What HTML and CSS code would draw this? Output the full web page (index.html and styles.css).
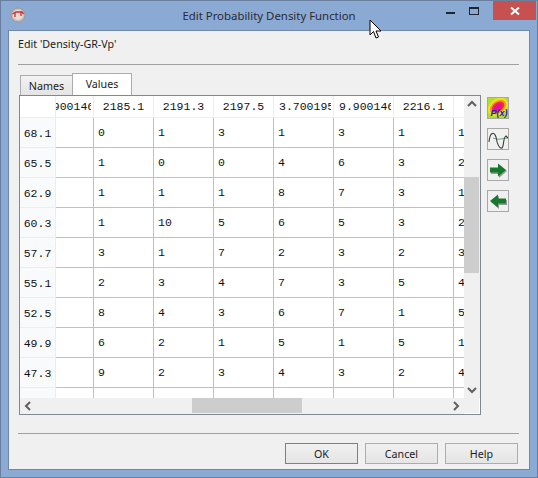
FILE: index.html
```html
<!DOCTYPE html>
<html lang="en">
<head>
    <meta charset="utf-8">
    <meta name="viewport" content="width=device-width, initial-scale=1.0">
    <title>Edit Probability Density Function</title>
    <link rel="stylesheet" href="styles.css">
</head>
<body>
    <div class="window">
        <div class="titlebar">
            <svg class="app-icon" width="18" height="18" viewBox="0 0 18 18">
                <circle cx="9" cy="9" r="7" fill="#c9bfbf" stroke="#a09696"/>
                <circle cx="9" cy="9" r="5" fill="#e6dada"/>
                <path d="M3.500 8 L7 6 L13 6 L14.500 8 M6 6 V11 M12 6 V10" fill="none" stroke="#d02c2c" stroke-width="1.300"/>
            </svg>
            <div class="title">Edit Probability Density Function</div>
            <div class="controls">
                <div class="ctl-min"><span></span></div>
                <div class="ctl-max"><span></span></div>
                <div class="ctl-close">
                    <svg width="10" height="10" viewBox="0 0 10 10"><path d="M1 1.500 L9 8.500 M9 1.500 L1 8.500" stroke="#fff" stroke-width="2"/></svg>
                </div>
            </div>
        </div>
        <div class="client">
            <div class="heading">Edit 'Density-GR-Vp'</div>
            <div class="rule"></div>
            <div class="tabs">
                <div class="tab">Names</div>
                <div class="tab tab-on">Values</div>
            </div>
            <div class="middle">
                <div class="frame">
                    <div class="view">
                        <table class="grid">
                            <colgroup>
                                <col class="c-label"><col class="c-first"><col class="c-n"><col class="c-n"><col class="c-n"><col class="c-n"><col class="c-n"><col class="c-n"><col class="c-n">
                            </colgroup>
                            <tr class="head">
                                <th></th><th class="left"><span class="clip shift">9.900146</span></th><th>2185.1</th><th>2191.3</th><th>2197.5</th><th class="left"><span class="clip">3.700195</span></th><th class="left"><span class="clip">9.900146</span></th><th>2216.1</th><th></th>
                            </tr>
                            <tr><th>68.1</th><td></td><td>0</td><td>1</td><td>3</td><td>1</td><td>3</td><td>1</td><td>1</td></tr>
                            <tr><th>65.5</th><td></td><td>1</td><td>0</td><td>0</td><td>4</td><td>6</td><td>3</td><td>2</td></tr>
                            <tr><th>62.9</th><td></td><td>1</td><td>1</td><td>1</td><td>8</td><td>7</td><td>3</td><td>1</td></tr>
                            <tr><th>60.3</th><td></td><td>1</td><td>10</td><td>5</td><td>6</td><td>5</td><td>3</td><td>2</td></tr>
                            <tr><th>57.7</th><td></td><td>3</td><td>1</td><td>7</td><td>2</td><td>3</td><td>2</td><td>3</td></tr>
                            <tr><th>55.1</th><td></td><td>2</td><td>3</td><td>4</td><td>7</td><td>3</td><td>5</td><td>4</td></tr>
                            <tr><th>52.5</th><td></td><td>8</td><td>4</td><td>3</td><td>6</td><td>7</td><td>1</td><td>5</td></tr>
                            <tr><th>49.9</th><td></td><td>6</td><td>2</td><td>1</td><td>5</td><td>1</td><td>5</td><td>1</td></tr>
                            <tr><th>47.3</th><td></td><td>9</td><td>2</td><td>3</td><td>4</td><td>3</td><td>2</td><td>4</td></tr>
                            <tr><th></th><td></td><td></td><td></td><td></td><td></td><td></td><td></td><td></td></tr>
                        </table>
                    </div>
                    <div class="vbar">
                        <svg width="16" height="16" viewBox="0 0 16 16"><path d="M4 10 L8 6 L12 10" fill="none" stroke="#606060" stroke-width="2"/></svg>
                        <div class="vtrack"><div class="vthumb"></div></div>
                        <svg width="16" height="16" viewBox="0 0 16 16"><path d="M4 6 L8 10 L12 6" fill="none" stroke="#606060" stroke-width="2"/></svg>
                    </div>
                    <div class="hbar">
                        <svg width="16" height="16" viewBox="0 0 16 16"><path d="M10 4 L6 8 L10 12" fill="none" stroke="#606060" stroke-width="2"/></svg>
                        <div class="htrack"><div class="hthumb"></div></div>
                        <svg width="16" height="16" viewBox="0 0 16 16"><path d="M6 4 L10 8 L6 12" fill="none" stroke="#606060" stroke-width="2"/></svg>
                    </div>
                    <div class="corner"></div>
                </div>
                <div class="tools">
                    <div class="tool">
                        <svg width="20" height="20" viewBox="0 0 20 20">
                            <rect width="20" height="20" fill="#b4dc2e"/>
                            <g transform="rotate(-35 10 9)">
                                <ellipse cx="10" cy="9" rx="11" ry="8" fill="#e8e61e"/>
                                <ellipse cx="10" cy="9" rx="9" ry="6" fill="#fb9a1c"/>
                                <ellipse cx="10" cy="9" rx="7" ry="4.500" fill="#f0303a"/>
                                <ellipse cx="10" cy="9" rx="4.500" ry="2.800" fill="#e0109a"/>
                            </g>
                            <text x="19.500" y="18" class="pofx">P(x)</text>
                        </svg>
                    </div>
                    <div class="tool">
                        <svg width="20" height="20" viewBox="0 0 20 20">
                            <path d="M5 9 Q9 11 13 10 T20 9" fill="none" stroke="#5fae80"/>
                            <path d="M1 13 C2 3 6 2 8 8 C9 14 11 20 14 19 C16 18 15 8 18 7 L20 9" fill="none" stroke="#3c3c3c" stroke-width="1.100"/>
                        </svg>
                    </div>
                    <div class="tool">
                        <svg width="20" height="20" viewBox="0 0 20 20">
                            <path d="M3 9 H11 V5 L19 11 L11 18 V14 H3 Z" fill="#9a9a9a"/>
                            <path d="M2 7.500 H10 V3.500 L18 10 L10 16.500 V12.500 H2 Z" fill="#167a2c"/>
                        </svg>
                    </div>
                    <div class="tool">
                        <svg width="20" height="20" viewBox="0 0 20 20">
                            <path d="M19 9 H11 V5 L3 11 L11 18 V14 H19 Z" fill="#9a9a9a"/>
                            <path d="M18 7.500 H10 V3.500 L2 10 L10 16.500 V12.500 H18 Z" fill="#167a2c"/>
                        </svg>
                    </div>
                </div>
            </div>
            <div class="rule rule-low"></div>
            <div class="buttons">
                <button class="btn btn-default">OK</button>
                <button class="btn">Cancel</button>
                <button class="btn">Help</button>
            </div>
        </div>
        <svg class="cursor" width="14" height="22" viewBox="0 0 14 22">
            <path d="M1 1 V16 L4.500 12.500 L7 19 L9.500 18 L7 12 H12 Z" fill="#fff" stroke="#000"/>
        </svg>
    </div>
</body>
</html>
```

FILE: styles.css
```css
* {
    box-sizing: border-box;
}
html, body {
    margin: 0;
    height: 100%;
}
body {
    font-family: "Noto Sans", sans-serif;
    font-size: 10.7px;
    color: #1c1c1c;
}
.window {
    position: relative;
    width: 538px;
    height: 478px;
    padding: 0 7px 7px 7px;
    background-color: #8aa9d3;
    border: 1px solid #6a7f9e;
    display: flex;
    flex-direction: column;
}
.titlebar {
    height: 29px;
    flex: none;
    display: flex;
    align-items: flex-start;
    position: relative;
}
.app-icon {
    margin: 5px 0 0 1px;
}
.title {
    position: absolute;
    left: 0;
    right: 0;
    top: 7px;
    text-align: center;
    font-size: 11.4px;
    line-height: 16px;
    color: #2a2a33;
}
.controls {
    position: absolute;
    top: 0;
    right: -6px;
    display: flex;
    align-items: flex-start;
}
.ctl-min, .ctl-max {
    width: 26px;
    height: 19px;
    position: relative;
}
.ctl-min span {
    display: block;
    width: 9px;
    height: 2px;
    background-color: #1d2530;
    margin: 11px 0 0 4px;
}
.ctl-max span {
    display: block;
    width: 10px;
    height: 8px;
    border: 1px solid #1d2530;
    border-top-width: 2px;
    margin: 6px 0 0 1px;
}
.ctl-close {
    width: 43px;
    height: 19px;
    margin-left: -1px;
    background-color: #c75050;
    display: flex;
    align-items: center;
    justify-content: center;
}
.client {
    flex: 1;
    background-color: #f0f0f0;
    border: 1px solid #6f87a8;
    padding: 0 9px;
    display: flex;
    flex-direction: column;
}
.heading {
    margin-top: 6px;
    line-height: 15px;
    color: #1c1c1c;
}
.rule {
    height: 1px;
    background-color: #a0a0a0;
    margin-top: 12px;
    width: 501px;
    flex: none;
}
.tabs {
    display: flex;
    align-items: flex-end;
    height: 22px;
    margin: 8px 0 0 2px;
    flex: none;
}
.tab {
    width: 53px;
    height: 20px;
    text-align: center;
    line-height: 20px;
    background: linear-gradient(#f2f2f2, #e4e4e4);
    border: 1px solid #acacac;
    border-bottom: none;
}
.tab-on {
    width: 60px;
    height: 22px;
    line-height: 20px;
    background: #fff;
    margin-left: -1px;
}
.middle {
    display: flex;
    flex: none;
    height: 320px;
    margin-left: 1px;
}
.frame {
    width: 462px;
    height: 320px;
    border: 1px solid #828790;
    display: grid;
    grid-template-columns: 444px 16px;
    grid-template-rows: 302px 16px;
    background-color: #f0f0f0;
    position: relative;
}
.view {
    overflow: hidden;
    background-color: #fff;
}
.grid {
    table-layout: fixed;
    width: 494px;
    border-collapse: separate;
    border-spacing: 0;
    font-family: "Liberation Mono", monospace;
    font-size: 11.5px;
    color: #111;
}
.c-label { width: 36px; }
.c-first { width: 38px; }
.c-n { width: 60px; }
.grid tr {
    height: 30px;
}
.grid tr.head {
    height: 22px;
}
.grid th, .grid td {
    font-weight: normal;
    padding: 0;
    overflow: hidden;
    white-space: nowrap;
    border-right: 1px solid #c0c0c0;
    border-bottom: 1px solid #c0c0c0;
}
.grid td {
    padding-left: 4px;
    text-align: left;
}
.grid th {
    padding-top: 2px;
    background-color: #f9fafc;
    border-color: #e6eef7;
    text-align: center;
}
.grid .head th {
    padding-top: 0;
    background-color: #fff;
}
.grid .head .left {
    text-align: left;
    padding-left: 5px;
}
.clip {
    display: inline-block;
    width: 52px;
    overflow: hidden;
    vertical-align: bottom;
}
.shift {
    margin-left: -22px;
}
.vbar {
    display: flex;
    flex-direction: column;
    background-color: #f0f0f0;
}
.vtrack {
    flex: 1;
    padding-top: 65px;
}
.vthumb {
    width: 15px;
    height: 96px;
    background-color: #cdcdcd;
}
.hbar {
    display: flex;
    background-color: #f0f0f0;
}
.htrack {
    flex: 1;
    padding-left: 156px;
}
.hthumb {
    width: 110px;
    height: 15px;
    background-color: #cdcdcd;
}
.corner {
    background-color: #f0f0f0;
    border-right: 1px solid #fff;
    border-bottom: 1px solid #fff;
}
.tools {
    display: flex;
    flex-direction: column;
    gap: 9px;
    margin: 2px 0 0 6px;
}
.tool {
    width: 22px;
    height: 22px;
    border: 1px solid #a8a8a8;
    background-color: #f0f0f0;
}
.tool svg {
    display: block;
}
.pofx {
    font-family: "Liberation Sans", sans-serif;
    font-size: 9px;
    font-weight: bold;
    font-style: italic;
    fill: #2222c8;
    text-anchor: end;
}
.rule-low {
    margin-top: 18px;
}
.buttons {
    display: flex;
    justify-content: flex-end;
    gap: 7px;
    margin-top: 9px;
    width: 500px;
}
.btn {
    width: 73px;
    height: 21px;
    padding: 0;
    font: inherit;
    color: #1c1c1c;
    background: linear-gradient(#f0f0f0, #e5e5e5);
    border: 1px solid #acacac;
}
.btn-default {
    border-color: #3c8fdc;
}
.cursor {
    position: absolute;
    left: 368px;
    top: 18px;
}
```
